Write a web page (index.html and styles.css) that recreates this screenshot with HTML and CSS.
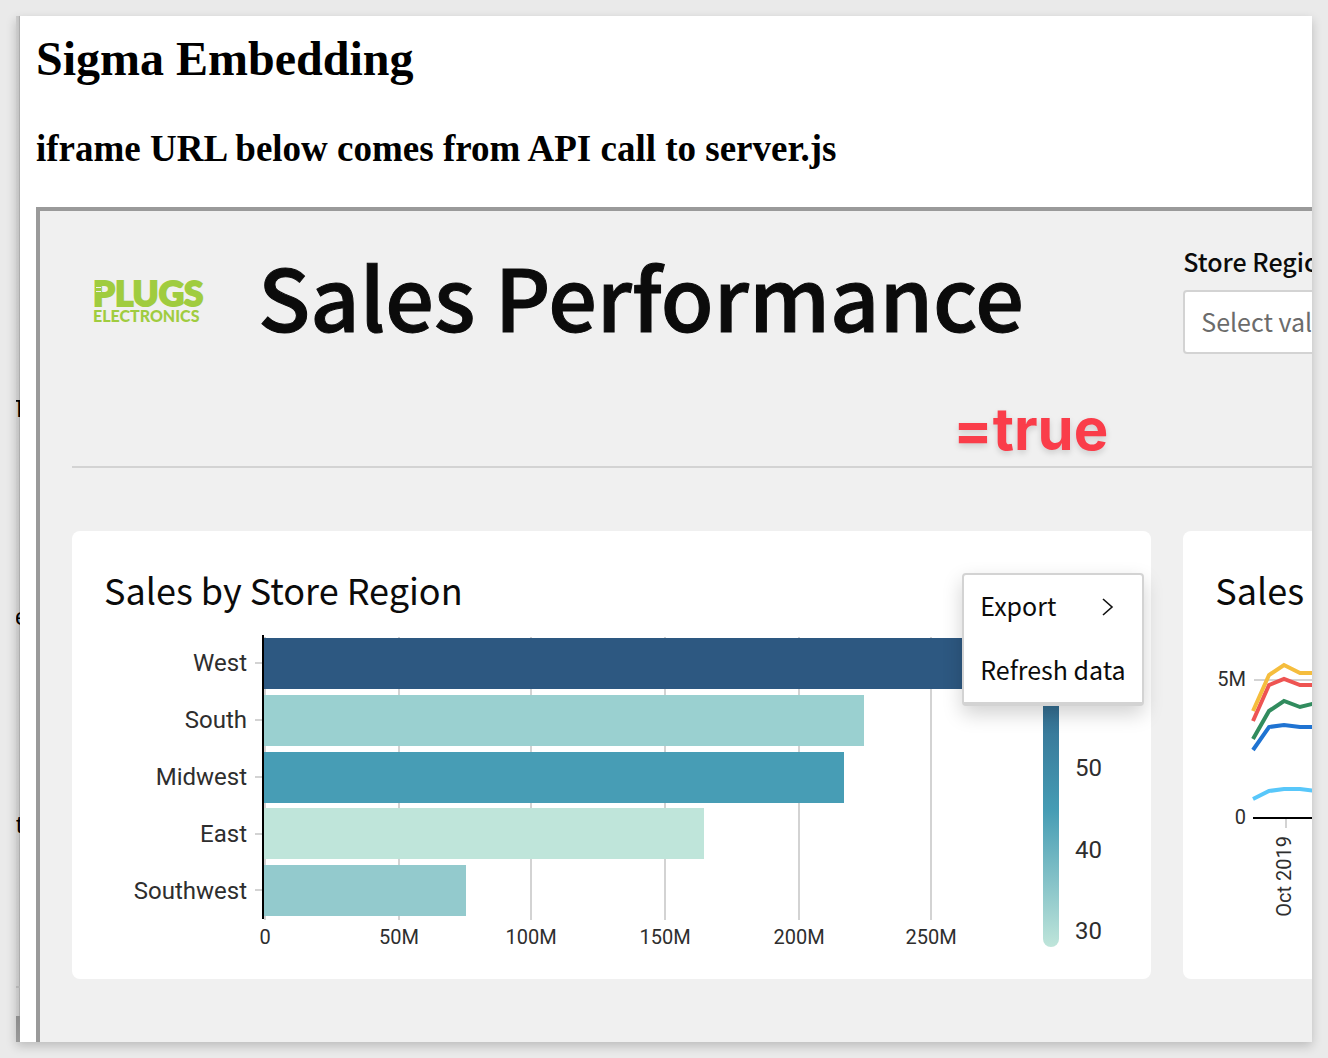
FILE: index.html
```html
<!DOCTYPE html>
<html lang="en">
<head>
<meta charset="utf-8">
<title>Sigma Embedding</title>
<link rel="stylesheet" href="styles.css">
</head>
<body>
<div class="window">
  <div class="backdrop" aria-hidden="true">
    <span class="peek peek-t">T</span>
    <span class="peek peek-e">e</span>
    <span class="peek peek-f">t</span>
    <span class="backdrop-foot"></span>
  </div>
  <main class="page">
    <h2 class="page-title">Sigma Embedding</h2>
    <h3 class="page-subtitle">iframe URL below comes from API call to server.js</h3>
    <section class="embed">
      <header class="hero">
        <div class="brand">
          <svg class="logo" viewBox="0 0 116 48" width="116" height="48" role="img" aria-label="Plugs Electronics">
            <text class="logo-name" x="1" y="30">PLUGS</text>
            <text class="logo-sub" x="1" y="46">ELECTRONICS</text>
            <path d="M4 11h5v1H4zM4 15h5v1H4z" fill="#f0f0f0"/>
          </svg>
          <h1 class="hero-title">Sales Performance</h1>
          <span class="note">=true</span>
        </div>
        <div class="filter">
          <label class="filter-label" for="region">Store Region</label>
          <input class="filter-input" id="region" type="text" placeholder="Select values">
        </div>
      </header>
      <div class="cards">
        <article class="card">
          <h4 class="card-title">Sales by Store Region</h4>
          <svg class="chart" viewBox="0 0 1015 315" width="1015" height="315" role="img" aria-label="Sales by store region">
            <defs>
              <linearGradient id="scale" x1="0" y1="0" x2="0" y2="1">
                <stop offset="0" stop-color="#2d5881"/>
                <stop offset="0.53" stop-color="#459cb4"/>
                <stop offset="1" stop-color="#bfe5da"/>
              </linearGradient>
            </defs>
            <path class="grid" d="M161 5V288M295 5V288M427 5V288M561 5V288M695 5V288M827 5V288M151 31H158M151 88H158M151 145H158M151 202H158M151 258H158"/>
            <rect x="160" y="6" width="736" height="51" fill="#2d5881"/>
            <rect x="160" y="63" width="600" height="51" fill="#9ad0d0"/>
            <rect x="160" y="120" width="580" height="51" fill="#479db5"/>
            <rect x="160" y="176" width="440" height="51" fill="#bfe5da"/>
            <rect x="160" y="233" width="202" height="51" fill="#93cacd"/>
            <path class="axis" d="M159 3V287"/>
            <g class="label label-end">
              <text x="143" y="39">West</text>
              <text x="143" y="96">South</text>
              <text x="143" y="153">Midwest</text>
              <text x="143" y="210">East</text>
              <text x="143" y="267">Southwest</text>
            </g>
            <g class="tick">
              <text x="161" y="312">0</text>
              <text x="295" y="312">50M</text>
              <text x="427" y="312">100M</text>
              <text x="561" y="312">150M</text>
              <text x="695" y="312">200M</text>
              <text x="827" y="312">250M</text>
            </g>
            <rect x="939" y="22" width="16" height="293" rx="8" fill="url(#scale)"/>
            <g class="label">
              <text x="971" y="144">50</text>
              <text x="971" y="226">40</text>
              <text x="971" y="307">30</text>
            </g>
          </svg>
          <div class="menu">
            <button class="menu-item" type="button">Export
              <svg class="chevron" viewBox="0 0 12 24" width="12" height="24" aria-hidden="true"><path d="M1 6L10 14L1 22" fill="none" stroke="#111" stroke-width="1.6"/></svg>
            </button>
            <button class="menu-item" type="button">Refresh data</button>
          </div>
        </article>
        <article class="card">
          <h4 class="card-title">Sales</h4>
          <svg class="chart" viewBox="0 0 1015 315" width="1015" height="315" role="img" aria-label="Sales over time">
            <path class="grid" d="M39 48H1015M71 187V196"/>
            <path class="axis" d="M38 186H1015"/>
            <g class="series">
              <path stroke="#58c7fa" d="M38 167L54 159L69 157H85L101 159"/>
              <path stroke="#1f73d2" d="M38 118L54 95L69 93L85 95H101"/>
              <path stroke="#318c5e" d="M38 107L54 79L69 69L85 75L101 71"/>
              <path stroke="#ee5452" d="M38 89L54 53L69 47L85 53H101"/>
              <path stroke="#f5bd3d" d="M38 79L54 43L69 33L85 41H101"/>
            </g>
            <g class="tick tick-end">
              <text x="31" y="54">5M</text>
              <text x="31" y="192">0</text>
              <text x="76" y="204" transform="rotate(-90 76 204)">Oct 2019</text>
            </g>
          </svg>
        </article>
      </div>
    </section>
  </main>
</div>
</body>
</html>
```
FILE: styles.css
```css
* { box-sizing: border-box; }

body {
  margin: 0;
  padding: 16px;
  background: #eaeaea;
  color: #0b0b0b;
  font-family: "Noto Sans CJK SC", "Noto Sans", sans-serif;
}

.window {
  display: flex;
  height: calc(100vh - 32px);
  overflow: hidden;
  box-shadow: 0 4px 10px rgba(0, 0, 0, 0.2);
}

/* sliver of the window that lies behind the page */
.backdrop {
  position: relative;
  flex: 0 0 4px;
  overflow: hidden;
  background: linear-gradient(to right, #cdcdcd, #c4c4c4 70%, #9c9c9c);
  color: #000;
  font: 24px/28px "Liberation Sans", Arial, sans-serif;
}
.peek { position: absolute; }
.peek-t { top: 379px; left: -4px; }
.peek-e { top: 587px; left: -1px; }
.peek-f { top: 795px; left: 0; }
.backdrop-foot {
  position: absolute;
  inset: auto 0 0;
  height: 56px;
  border-top: 2px solid #b4b4b4;
  background: linear-gradient(to bottom, transparent 28px, #8c8c8c 28px, #999 100%);
}

.page {
  flex: 1;
  min-width: 0;
  display: flex;
  flex-direction: column;
  padding: 15px 0 0 16px;
  overflow: hidden;
  background: #fff;
}
.page-title, .page-subtitle {
  margin: 0;
  color: #000;
  font-family: "Liberation Serif", "Times New Roman", serif;
  font-weight: 700;
}
.page-title { font-size: 48px; line-height: 56px; }
.page-subtitle { margin: 40px 0 37px; font-size: 37px; line-height: 43px; }

.embed {
  flex: 1;
  width: 177%;
  padding: 32px;
  border: 4px solid #9a9a9a;
  border-right: 0;
  border-bottom: 0;
  background: #f0f0f0;
}

.hero {
  display: grid;
  grid-template-columns: 1fr 1fr;
  gap: 32px;
  height: 225px;
  border-bottom: 2px solid #d3d3d3;
}
.brand {
  position: relative;
  display: flex;
  align-items: flex-start;
  gap: 50px;
  padding-left: 20px;
}
.logo { margin-top: 33px; fill: #a0cc3f; font-family: Lato, sans-serif; font-weight: 900; }
.logo-name { font-size: 35px; stroke: #a0cc3f; stroke-width: 2px; }
.logo-sub { font-size: 16px; }
.hero-title {
  margin: 0;
  font-size: 86px;
  font-weight: 500;
  line-height: 104px;
  white-space: nowrap;
  -webkit-text-stroke: 1px currentColor;
}
.note {
  position: absolute;
  right: 43px;
  bottom: 1px;
  color: #fa3d4a;
  font: 700 58px/72px Inter, sans-serif;
  text-shadow: 0 3px 6px rgba(0, 0, 0, 0.15);
}

.filter { display: flex; flex-direction: column; gap: 11px; }
.filter-label {
  font-size: 25px;
  font-weight: 500;
  line-height: 36px;
}
.filter-input {
  width: 100%;
  height: 64px;
  padding: 0 16px 2px;
  border: 2px solid #d3d3d3;
  border-radius: 4px;
  background: #fff;
  font: 25px/40px "Noto Sans CJK SC", sans-serif;
}
.filter-input::placeholder { color: #6b6b6b; opacity: 1; }

.cards {
  display: grid;
  grid-template-columns: 1fr 1fr;
  gap: 32px;
  margin-top: 63px;
}
.card {
  position: relative;
  padding: 32px;
  border-radius: 8px;
  background: #fff;
}
.card-title {
  margin: 0 0 17px;
  font-size: 36px;
  font-weight: 400;
  line-height: 52px;
}
.chart { display: block; font-family: Roboto, sans-serif; fill: #2e2e2e; }
.grid { fill: none; stroke: #d3d3d3; stroke-width: 2; }
.axis { fill: none; stroke: #000; stroke-width: 2; }
.series { fill: none; stroke-width: 4; }
.label { font-size: 24px; }
.tick { font-size: 20px; text-anchor: middle; }
.label-end, .tick-end { text-anchor: end; }

.menu {
  position: absolute;
  top: 42px;
  right: 7px;
  width: 182px;
  border: 2px solid #d3d3d3;
  border-bottom-width: 4px;
  border-radius: 4px;
  background: #fff;
  box-shadow: 0 8px 20px rgba(0, 0, 0, 0.18);
}
.menu-item {
  display: flex;
  align-items: center;
  justify-content: space-between;
  width: 100%;
  height: 64px;
  padding: 0 16px 4px;
  border: 0;
  background: none;
  color: #0b0b0b;
  font: 25px/40px "Noto Sans CJK SC", sans-serif;
  white-space: nowrap;
}
.menu-item:last-child { height: 63px; }
.chevron { margin-right: 12px; }
```
